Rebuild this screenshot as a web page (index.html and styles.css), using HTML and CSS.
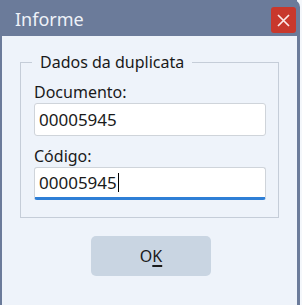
FILE: index.html
```html
<html>

<head>
    <link rel="stylesheet" href="styles.css">
</head>

<body>
    <div class="window">
        <!-- Title bar -->
        <div class="titlebar">
            <span class="title">Informe</span>
            <div class="close">
                <svg width="13" height="13" viewBox="0 0 13 13">
                    <path d="M1 1 L12 12 M12 1 L1 12" stroke="#fbe9e7" stroke-width="1.7" fill="none" />
                </svg>
            </div>
        </div>

        <!-- Content -->
        <div class="content">
            <fieldset class="group">
                <legend class="group-title">Dados da duplicata</legend>
                <div class="field-label">Documento:</div>
                <div class="textbox">00005945</div>
                <div class="field-label">Código:</div>
                <div class="textbox focused">00005945<span class="caret"></span></div>
            </fieldset>
            <div class="actions">
                <button class="btn">O<u>K</u></button>
            </div>
        </div>
    </div>
</body>

</html>
```

FILE: styles.css
```css
* {
    margin: 0;
    padding: 0;
    box-sizing: border-box;
    font-family: "Noto Sans", "Open Sans", sans-serif;
}

body {
    width: 302px;
    height: 305px;
    background: #f4f7fb;
    overflow: hidden;
}

.window {
    width: 300px;
    height: 305px;
    display: flex;
    flex-direction: column;
    background: #eef3fa;
    border-left: 2px solid #6b7b9a;
    border-right: 3px solid #6b7b9a;
    border-top-right-radius: 7px;
}

.titlebar {
    height: 36px;
    display: flex;
    align-items: center;
    justify-content: space-between;
    background: #6b7b9a;
    padding: 0 1px 0 13px;
}

.title {
    color: #eef2f8;
    font-size: 18px;
    margin-top: 1px;
}

.close {
    width: 25px;
    height: 26px;
    background: #c8382c;
    border-radius: 3px;
    display: flex;
    align-items: center;
    justify-content: center;
    margin-top: 4px;
}

.content {
    flex: 1;
    padding: 0 0 0 18px;
}

.group {
    width: 258px;
    height: 167px;
    margin-top: 15px;
    border: 1px solid #c5cdd8;
    padding: 8px 12px 0 13px;
}

.group-title {
    font-size: 16px;
    color: #1a1a1a;
    padding: 0 8px;
    margin-left: -2px;
    line-height: 22px;
}

.field-label {
    font-size: 16px;
    color: #1a1a1a;
    line-height: 22px;
}

.textbox {
    height: 33px;
    width: 232px;
    background: #fff;
    border: 1px solid #cfd4da;
    border-radius: 3px;
    font-size: 17px;
    color: #1a1a1a;
    line-height: 31px;
    padding-left: 4px;
    margin-bottom: 9px;
}

.textbox.focused {
    border-bottom: 3px solid #2f7fd6;
    line-height: 30px;
}

.caret {
    display: inline-block;
    width: 1px;
    height: 19px;
    background: #000;
    vertical-align: -3px;
    margin-left: 1px;
}

.actions {
    display: flex;
    padding: 18px 0 0 71px;
}

.btn {
    width: 120px;
    height: 40px;
    border: none;
    border-radius: 5px;
    background: #c9d5e2;
    font-size: 16px;
    color: #1a1a1a;
}

.btn u {
    text-decoration-thickness: 2px;
    text-underline-offset: 3px;
}
```
